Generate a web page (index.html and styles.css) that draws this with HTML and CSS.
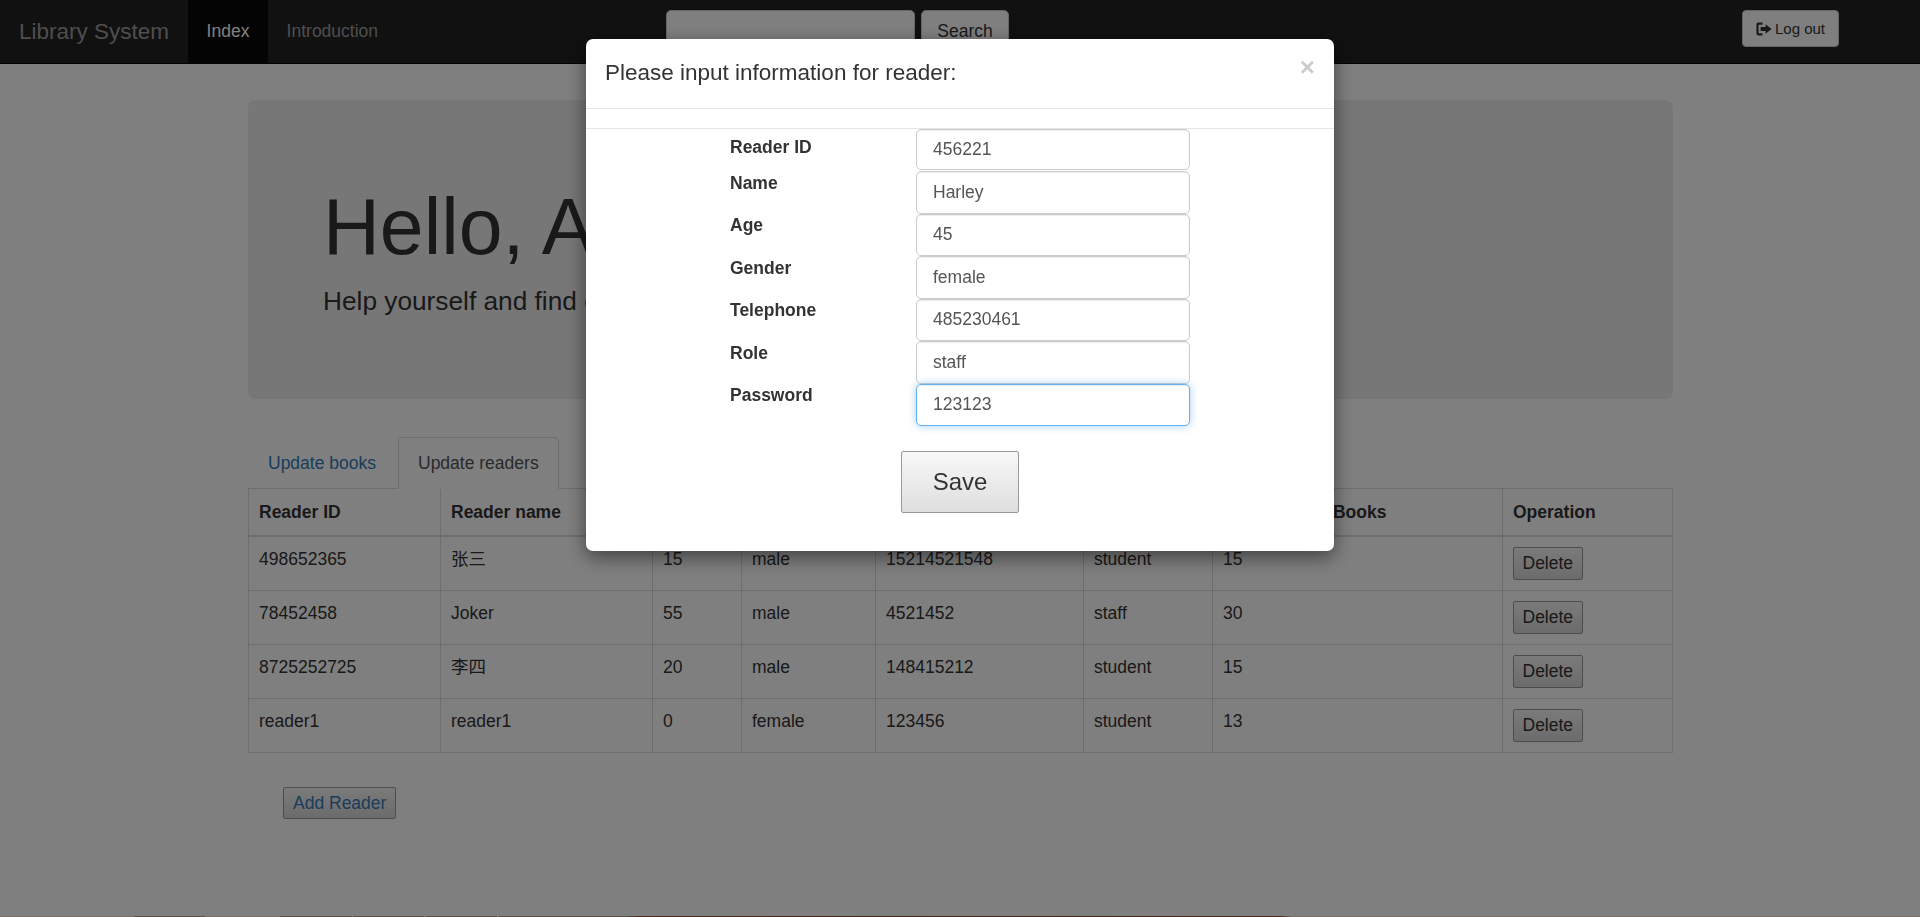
FILE: index.html
```html
<!DOCTYPE html>
<html lang="en">
<head>
    <meta charset="UTF-8">
    <meta name="viewport" content="width=device-width, initial-scale=1.0">
    <title>Library System</title>
    <link rel="stylesheet" href="styles.css">
</head>
<body>
    <!-- Top bar -->
    <nav class="navbar">
        <a class="brand">Library System</a>
        <ul class="nav-links">
            <li class="active"><a>Index</a></li>
            <li><a>Introduction</a></li>
        </ul>
        <form class="nav-search">
            <input class="search-input" type="text">
            <button class="search-btn" type="button">Search</button>
        </form>
        <button class="logout-btn" type="button">
            <svg class="logout-icon" viewBox="0 0 16 14" aria-hidden="true">
                <path d="M6.5 0.5H2.6C1.2 0.5 0.4 1.4 0.4 2.7V11.3C0.4 12.6 1.2 13.5 2.6 13.5H6.5V11.3H3.2C2.8 11.3 2.6 11.1 2.6 10.7V3.3C2.6 2.9 2.8 2.7 3.2 2.7H6.5Z"/>
                <path d="M9.6 2.2L15.6 7L9.6 11.8V9H4.6V5H9.6Z"/>
            </svg>
            Log out
        </button>
    </nav>

    <div class="container">
        <div class="jumbotron">
            <h1>Hello, Admin!</h1>
            <p>Help yourself and find everything you need.</p>
        </div>

        <ul class="tabs">
            <li><a>Update books</a></li>
            <li class="active"><a>Update readers</a></li>
        </ul>

        <table class="readers-table">
            <thead>
                <tr>
                    <th class="col-id">Reader ID</th>
                    <th class="col-name">Reader name</th>
                    <th class="col-age">Age</th>
                    <th class="col-gender">Gender</th>
                    <th class="col-phone">Telephone</th>
                    <th class="col-role">Role</th>
                    <th class="col-books">Max. Borrow Books</th>
                    <th>Operation</th>
                </tr>
            </thead>
            <tbody>
                <tr>
                    <td>498652365</td><td>张三</td><td>15</td><td>male</td><td>15214521548</td><td>student</td><td>15</td>
                    <td><button class="btn" type="button">Delete</button></td>
                </tr>
                <tr>
                    <td>78452458</td><td>Joker</td><td>55</td><td>male</td><td>4521452</td><td>staff</td><td>30</td>
                    <td><button class="btn" type="button">Delete</button></td>
                </tr>
                <tr>
                    <td>8725252725</td><td>李四</td><td>20</td><td>male</td><td>148415212</td><td>student</td><td>15</td>
                    <td><button class="btn" type="button">Delete</button></td>
                </tr>
                <tr>
                    <td>reader1</td><td>reader1</td><td>0</td><td>female</td><td>123456</td><td>student</td><td>13</td>
                    <td><button class="btn" type="button">Delete</button></td>
                </tr>
            </tbody>
        </table>

        <button class="btn btn-add" type="button">Add Reader</button>
    </div>

    <!-- Footer picture, only its top edge shows -->
    <div class="footer-strip"></div>

    <!-- Dialog -->
    <div class="modal-backdrop"></div>
    <div class="modal">
        <div class="modal-content">
            <div class="modal-header">
                <span class="close-modal">&times;</span>
                <h4>Please input information for reader:</h4>
            </div>
            <div class="modal-spacer"></div>
            <form class="reader-form">
                <div class="field field-first">
                    <label>Reader ID</label>
                    <input type="text" value="456221">
                </div>
                <div class="field">
                    <label>Name</label>
                    <input type="text" value="Harley">
                </div>
                <div class="field">
                    <label>Age</label>
                    <input type="text" value="45">
                </div>
                <div class="field">
                    <label>Gender</label>
                    <input type="text" value="female">
                </div>
                <div class="field">
                    <label>Telephone</label>
                    <input type="text" value="485230461">
                </div>
                <div class="field">
                    <label>Role</label>
                    <input type="text" value="staff">
                </div>
                <div class="field">
                    <label>Password</label>
                    <input class="focused" type="text" value="123123">
                </div>
                <div class="form-actions">
                    <button class="btn btn-save" type="button">Save</button>
                </div>
            </form>
        </div>
    </div>
</body>
</html>
```

FILE: styles.css
```css
:root {
    --text: #333;
    --link: #337ab7;
    --line: #ddd;
}

* {
    margin: 0;
    padding: 0;
    box-sizing: border-box;
}

html, body {
    height: 917px;
    overflow: hidden;
}

body {
    font-family: 'Liberation Sans', 'Noto Sans CJK SC', sans-serif;
    font-size: 17.5px;
    line-height: 25px;
    color: var(--text);
    background: #fff;
}

ul {
    list-style: none;
}

/* Top bar */
.navbar {
    display: flex;
    height: 64px;
    background: #222;
    border-bottom: 1px solid #080808;
}

.brand {
    width: 188px;
    padding: 19px 0 0 19px;
    font-size: 22.5px;
    line-height: 25px;
    color: #9d9d9d;
}

.nav-links {
    display: flex;
    width: 478px;
}

.nav-links a {
    display: block;
    height: 63px;
    padding: 19px 18.6px 0;
    color: #9d9d9d;
}

.nav-links .active a {
    background: #080808;
    color: #fff;
}

.nav-search {
    display: flex;
    gap: 6px;
    width: 1076px;
    padding-top: 10px;
}

.search-input {
    width: 249px;
    height: 42px;
    border: 1px solid #ccc;
    border-radius: 5px;
    background: #fff;
}

.search-btn {
    width: 88px;
    height: 42px;
    border: 1px solid #ccc;
    border-radius: 5px;
    background: #fff;
    color: var(--text);
    font: inherit;
}

.logout-btn {
    display: flex;
    align-items: center;
    justify-content: center;
    gap: 3px;
    width: 97px;
    height: 37px;
    margin-top: 10px;
    border: 1px solid #ccc;
    border-radius: 4px;
    background: #fff;
    color: var(--text);
    font: inherit;
    font-size: 15px;
}

.logout-icon {
    width: 16px;
    height: 14px;
    fill: var(--text);
}

/* Main */
.container {
    width: 1425px;
    height: 852px;
    margin-left: 248px;
    padding-top: 36px;
}

.jumbotron {
    height: 299px;
    padding: 60px 75px 0;
    background: #eee;
    border-radius: 7px;
}

.jumbotron h1 {
    margin-top: 24px;
    margin-bottom: 13px;
    font-size: 78.75px;
    font-weight: 500;
    line-height: 86px;
    white-space: nowrap;
}

.jumbotron p {
    font-size: 26.25px;
    line-height: 37px;
}

.tabs {
    display: flex;
    gap: 2px;
    height: 51px;
    margin-top: 38px;
}

.tabs a {
    display: block;
    height: 52px;
    padding: 13px 19px;
    color: var(--link);
    border: 1px solid transparent;
    border-radius: 5px 5px 0 0;
}

.tabs .active a {
    color: #555;
    background: #fff;
    border-color: var(--line);
    border-bottom-color: #fff;
}

.readers-table {
    width: 1425px;
    table-layout: fixed;
    border-collapse: collapse;
    border: 1px solid var(--line);
}

.readers-table th,
.readers-table td {
    padding: 10px;
    border: 1px solid var(--line);
    text-align: left;
    vertical-align: top;
}

.readers-table th {
    height: 47px;
    padding-top: 11px;
    padding-bottom: 9px;
    border-bottom-width: 2px;
    font-weight: bold;
    white-space: nowrap;
}

.readers-table td {
    height: 54px;
}

.col-id { width: 192px; }
.col-name { width: 212px; }
.col-age { width: 89px; }
.col-gender { width: 134px; }
.col-phone { width: 208px; }
.col-role { width: 129px; }
.col-books { width: 290px; }

.btn {
    display: block;
    height: 33px;
    padding: 0 8.5px;
    border: 1px solid #999;
    border-radius: 2px;
    background: linear-gradient(#f5f5f5, #d8d8d8);
    color: var(--text);
    font: inherit;
    line-height: 30px;
}

.btn-add {
    height: 32px;
    margin: 34px 0 0 35px;
    padding: 0 9px;
    color: var(--link);
}

/* Footer picture */
.footer-strip {
    height: 1px;
    background: linear-gradient(90deg,
        #f0dcc8 0, #f0dcc8 134px,
        #b4a490 134px, #b4a490 205px,
        #f0dcc8 205px, #f0dcc8 280px,
        #b4a490 280px, #b4a490 352px,
        #f0dcc8 352px, #f0dcc8 353px,
        #b4a490 353px, #b4a490 424px,
        #f0dcc8 424px, #f0dcc8 426px,
        #b4a490 426px, #b4a490 497px,
        #f0dcc8 497px, #f0dcc8 499px,
        #b4a490 499px, #b4a490 625px,
        #a85030 640px, #8a4a38 1000px, #a85030 1280px,
        #f0dcc8 1292px, #f0dcc8 100%);
}

/* Dialog */
.modal-backdrop {
    position: fixed;
    top: 0;
    left: 0;
    width: 100%;
    height: 100%;
    background: rgba(0, 0, 0, 0.5);
}

.modal {
    position: fixed;
    top: 39px;
    left: 586px;
    width: 748px;
}

.modal-content {
    height: 512px;
    background: #fff;
    border-radius: 7px;
    box-shadow: 0 6px 19px rgba(0, 0, 0, 0.5);
}

.modal-header {
    height: 70px;
    padding: 18px 19px 0;
    border-bottom: 1px solid #e5e5e5;
}

.modal-header h4 {
    font-size: 22.5px;
    font-weight: 500;
    line-height: 32px;
}

.close-modal {
    float: right;
    margin: -3px 0 0;
    font-size: 26px;
    font-weight: bold;
    line-height: 26px;
    color: #000;
    opacity: 0.2;
}

.modal-spacer {
    height: 20px;
    border-bottom: 1px solid #e5e5e5;
}

.reader-form {
    padding-left: 144px;
}

.field {
    display: flex;
    height: 42.5px;
}

.field label {
    width: 186px;
    margin-top: -0.5px;
    font-weight: bold;
}

.field-first {
    height: 42px;
}

.field-first label {
    padding-top: 6px;
}

.field input {
    flex: none;
    width: 274px;
    height: 42.5px;
    padding: 0 16px;
    border: 1px solid #ccc;
    border-radius: 5px;
    box-shadow: inset 0 1px 1px rgba(0, 0, 0, 0.075);
    color: #555;
    font: inherit;
}

.field-first input {
    height: 41px;
}

.field input.focused {
    border-color: #66afe9;
    box-shadow: inset 0 1px 1px rgba(0, 0, 0, 0.075), 0 0 8px rgba(102, 175, 233, 0.6);
}

.form-actions {
    margin: 25px 0 0 171px;
}

.btn-save {
    width: 118px;
    height: 62px;
    padding: 0;
    font-size: 24px;
    background: linear-gradient(#f8f8f8, #dedede);
}
```
